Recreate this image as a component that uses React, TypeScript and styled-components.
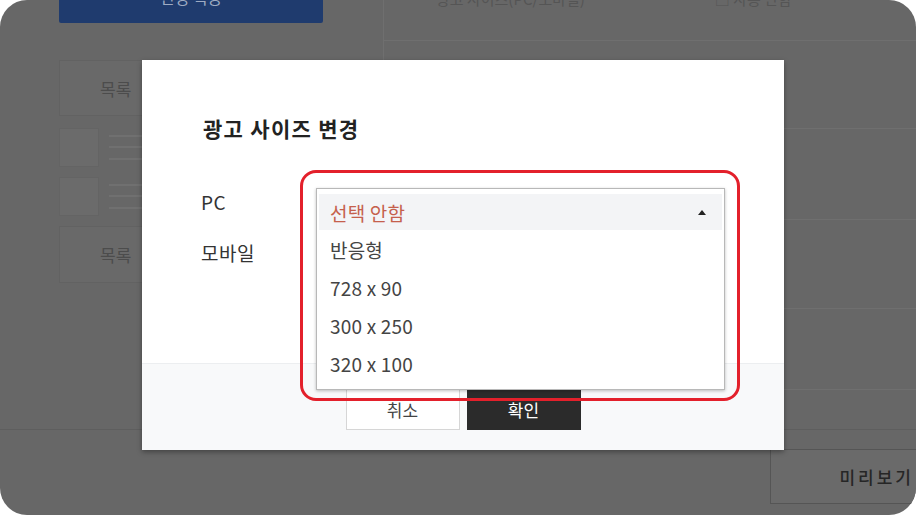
import styled, { createGlobalStyle } from 'styled-components';

const GlobalStyle = createGlobalStyle`
  html, body {
    margin: 0;
    padding: 0;
    background: #ffffff;
  }
  body {
    font-family: "Noto Sans CJK KR", "Noto Sans", sans-serif;
  }
`;

const FONT = `"Noto Sans CJK KR", "Noto Sans", sans-serif`;

const Screen = styled.div`
  position: relative;
  width: 916px;
  height: 515px;
  border-radius: 27px;
  overflow: hidden;
  background: #676767;
  font-family: ${FONT};
`;

// 어둡게 처리된 뒤쪽 페이지
const Page = styled.div`
  display: flex;
  flex-direction: column;
  height: 100%;
`;

const PageBody = styled.div`
  display: flex;
  height: 430px;
  border-bottom: 1px solid #5e5e5e;
  padding-left: 59px;
  box-sizing: border-box;
`;

const Sidebar = styled.div`
  width: 264px;
  display: flex;
  flex-direction: column;
`;

const ApplyBtn = styled.div`
  height: 23px;
  background: #1f3b6e;
  border-radius: 0 0 2px 2px;
  color: #9eabc2;
  font-size: 16px;
  line-height: 16px;
  display: flex;
  align-items: flex-end;
  justify-content: center;
  overflow: hidden;
  margin-bottom: 37px;
  span {
    margin-bottom: 18px;
  }
`;

const ListBox = styled.div<{ $h: number }>`
  height: ${(p) => p.$h}px;
  border: 1px solid #626262;
  background: #696969;
  display: flex;
  align-items: center;
  padding-left: 40px;
  color: #4c4c4c;
  font-size: 17px;
  margin-bottom: 12px;
`;

const ThumbRow = styled.div`
  display: flex;
  gap: 10px;
  height: 39px;
  margin-bottom: 10px;
`;

const Thumb = styled.div`
  width: 38px;
  border: 1px solid #646464;
  background: #6b6b6b;
`;

const ThumbLines = styled.div`
  display: flex;
  flex-direction: column;
  justify-content: space-around;
  padding: 2px 0;
  i {
    display: block;
    height: 2px;
    width: 120px;
    background: #707070;
  }
`;

const Main = styled.div`
  flex: 1;
  margin-left: 60px;
  border-left: 1px solid #6f6f6f;
  display: flex;
  flex-direction: column;
`;

const MainRow = styled.div<{ $h: number }>`
  height: ${(p) => p.$h}px;
  border-bottom: 1px solid #6f6f6f;
  display: flex;
  align-items: flex-start;
  gap: 130px;
  padding-left: 52px;
  color: #555;
  font-size: 15px;
  line-height: 15px;
  span {
    margin-top: -9px;
  }
`;

const PageFooter = styled.div`
  flex: 1;
  display: flex;
  justify-content: flex-end;
  padding-top: 19px;
`;

const PreviewBtn = styled.div`
  width: 146px;
  height: 55px;
  box-sizing: border-box;
  border: 1px solid #555;
  border-right: none;
  background: #6a6a6a;
  color: #262626;
  font-size: 17px;
  font-weight: 500;
  letter-spacing: 3px;
  display: flex;
  align-items: center;
  justify-content: flex-end;
  padding-right: 2px;
`;

// 모달
const Backdrop = styled.div`
  position: absolute;
  inset: 0;
  padding: 60px 0 0 142px;
`;

const Modal = styled.div`
  width: 642px;
  height: 390px;
  background: #fff;
  box-shadow: 0 2px 5px rgba(0, 0, 0, 0.35);
  display: flex;
  flex-direction: column;
`;

const ModalBody = styled.div`
  flex: 1;
  padding: 54px 0 0 61px;
`;

const Title = styled.h2`
  margin: 0 0 46px;
  font-size: 21px;
  line-height: 28px;
  font-weight: 700;
  color: #222;
  letter-spacing: 1.3px;
`;

const FormRow = styled.div`
  display: flex;
  align-items: flex-start;
  height: 42px;
  margin-bottom: 9px;
`;

const Label = styled.div`
  width: 113px;
  margin-left: -2px;
  font-size: 19px;
  line-height: 28px;
  letter-spacing: 0.5px;
  color: #333;
`;

const SelectWrap = styled.div`
  position: relative;
  width: 409px;
  height: 42px;
  margin-left: 2px;
  box-sizing: border-box;
  border: 1px solid #cfcfcf;
`;

const DropList = styled.ul`
  position: absolute;
  z-index: 2;
  top: -1px;
  left: -1px;
  width: 409px;
  margin: 0;
  padding: 5px 2px 7px;
  box-sizing: border-box;
  list-style: none;
  background: #fff;
  border: 1px solid #b8b8b8;
  box-shadow: 0 1px 3px rgba(0, 0, 0, 0.25);
`;

const Option = styled.li<{ $selected?: boolean }>`
  height: ${(p) => (p.$selected ? 36 : 38)}px;
  display: flex;
  align-items: center;
  justify-content: space-between;
  padding: 0 16px 0 11px;
  font-size: 19px;
  letter-spacing: 0.2px;
  color: ${(p) => (p.$selected ? '#c5604c' : '#444')};
  background: ${(p) => (p.$selected ? '#f3f4f6' : 'transparent')};
`;

const Caret = styled.span`
  width: 0;
  height: 0;
  border-left: 4px solid transparent;
  border-right: 4px solid transparent;
  border-bottom: 5px solid #222;
`;

const Highlight = styled.div`
  position: absolute;
  z-index: 3;
  top: -19px;
  left: -17px;
  right: -16px;
  bottom: -172px;
  border: 3px solid #e3202b;
  border-radius: 16px;
  pointer-events: none;
`;

const ModalFooter = styled.div`
  height: 87px;
  box-sizing: border-box;
  background: #f8f9fa;
  border-top: 1px solid #eceef0;
  display: flex;
  justify-content: center;
  gap: 7px;
  padding-top: 24px;
`;

const Button = styled.button<{ $dark?: boolean }>`
  width: 114px;
  height: 42px;
  font-family: ${FONT};
  font-size: 17px;
  border: 1px solid ${(p) => (p.$dark ? '#2b2b2b' : '#d6d6d6')};
  background: ${(p) => (p.$dark ? '#2b2b2b' : '#fff')};
  color: ${(p) => (p.$dark ? '#fff' : '#444')};
`;

const sizes = ['반응형', '728 x 90', '300 x 250', '320 x 100'];

export default function App() {
  return (
    <>
      <GlobalStyle />
      <Screen>
        <Page>
          <PageBody>
            <Sidebar>
              <ApplyBtn>
                <span>변경 적용</span>
              </ApplyBtn>
              <ListBox $h={54}>목록</ListBox>
              <ThumbRow>
                <Thumb />
                <ThumbLines>
                  <i />
                  <i />
                  <i />
                </ThumbLines>
              </ThumbRow>
              <ThumbRow>
                <Thumb />
                <ThumbLines>
                  <i />
                  <i />
                  <i />
                </ThumbLines>
              </ThumbRow>
              <ListBox $h={55}>목록</ListBox>
            </Sidebar>
            <Main>
              <MainRow $h={40}>
                <span>광고 사이즈(PC/모바일)</span>
                <span>□ 사용 안함</span>
              </MainRow>
              <MainRow $h={87} />
              <MainRow $h={90} />
              <MainRow $h={88} />
              <MainRow $h={80} />
            </Main>
          </PageBody>
          <PageFooter>
            <PreviewBtn>미리보기</PreviewBtn>
          </PageFooter>
        </Page>

        <Backdrop>
          <Modal>
            <ModalBody>
              <Title>광고 사이즈 변경</Title>
              <FormRow>
                <Label>PC</Label>
                <SelectWrap>
                  <DropList>
                    <Option $selected>
                      선택 안함
                      <Caret />
                    </Option>
                    {sizes.map((s) => (
                      <Option key={s}>{s}</Option>
                    ))}
                  </DropList>
                  <Highlight />
                </SelectWrap>
              </FormRow>
              <FormRow>
                <Label>모바일</Label>
                <SelectWrap />
              </FormRow>
            </ModalBody>
            <ModalFooter>
              <Button>취소</Button>
              <Button $dark>확인</Button>
            </ModalFooter>
          </Modal>
        </Backdrop>
      </Screen>
    </>
  );
}
